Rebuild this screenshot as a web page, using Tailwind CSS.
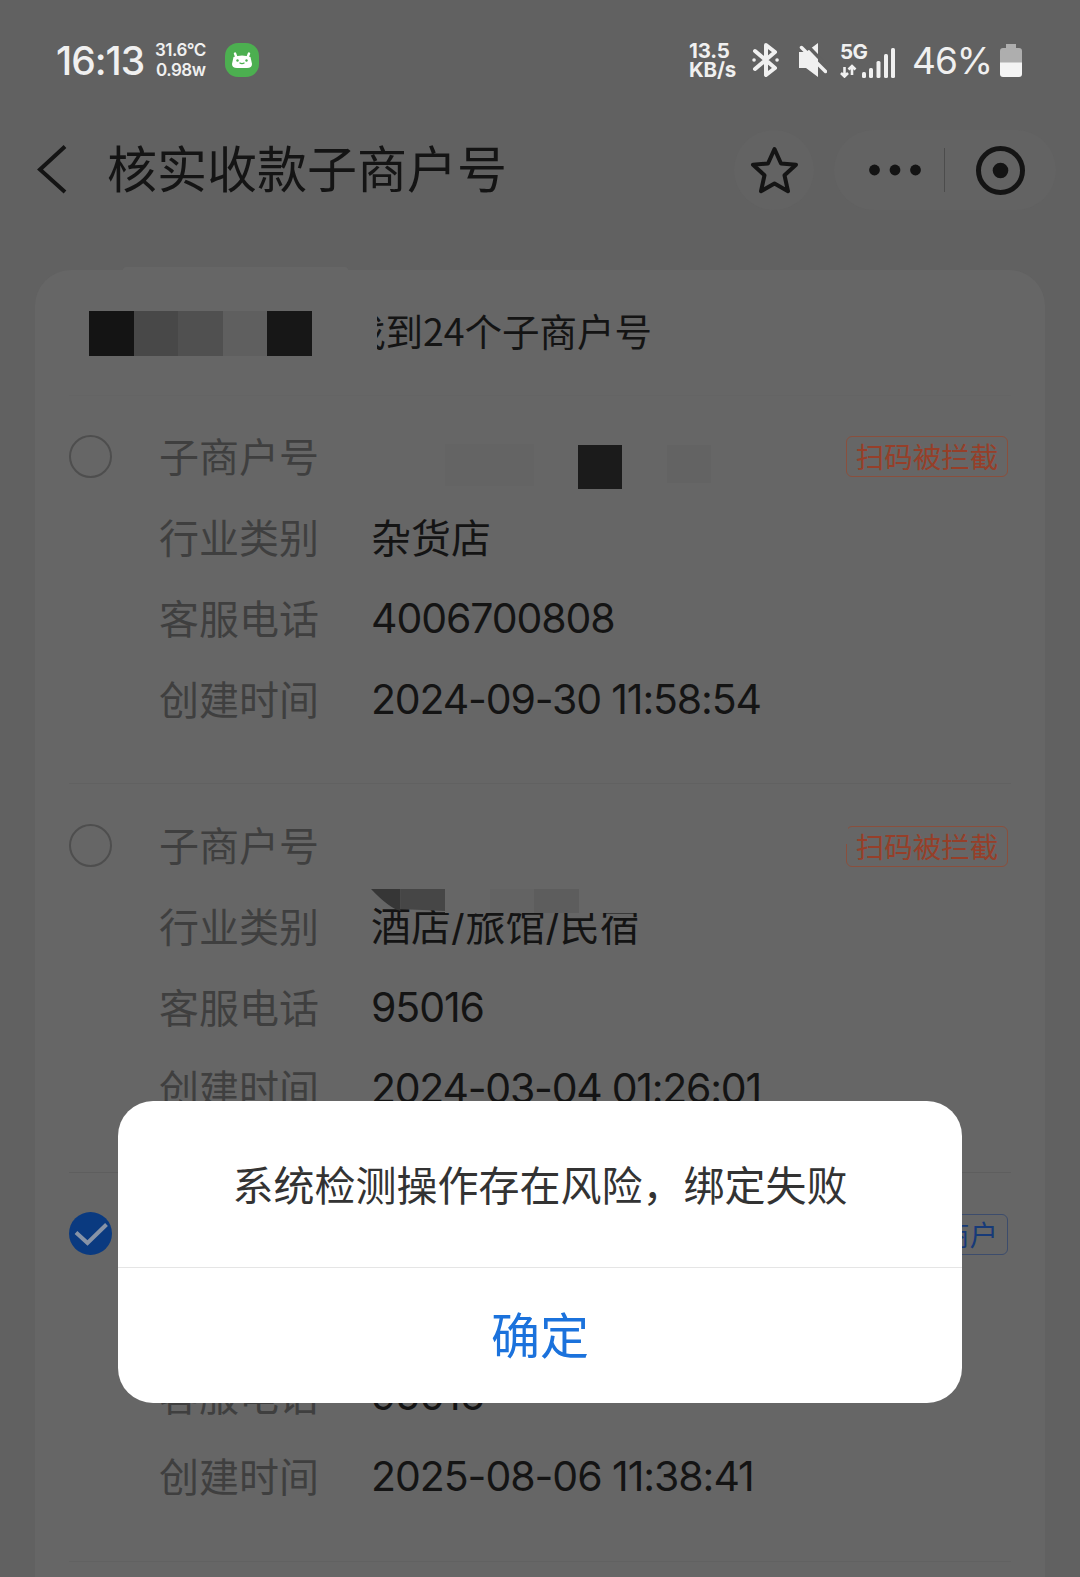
<!DOCTYPE html>
<html lang="zh-CN">
<head>
    <meta charset="UTF-8">
    <meta name="viewport" content="width=device-width, initial-scale=1.0">
    <title>核实收款子商户号</title>
    <script src="https://cdn.jsdelivr.net/npm/@tailwindcss/browser@4"></script>
</head>
<body class="bg-[#616161]">
    <div class="relative w-[1080px] h-[1577px] overflow-hidden bg-[#616161] text-[#141414] font-['Inter','Noto_Sans_CJK_SC',sans-serif]">

        <!-- Status bar -->
        <div class="flex items-center h-[120px] pl-[56px] pr-[58px] text-[#f0f0f0]">
            <div class="w-[99px] text-[39px] leading-none font-medium tracking-[-1px]">16:13</div>
            <div class="w-[70px] text-[17px] leading-[20px] font-semibold tracking-[-0.5px]">
                <div>31.6°C</div>
                <div class="pl-[1px]">0.98w</div>
            </div>
            <svg class="w-[34px] h-[34px]" viewBox="0 0 34 34">
                <rect width="34" height="34" rx="13" fill="#4caf50"/>
                <path d="M10 10.500l1.500 4M24 10.500l-1.500 4" stroke="#fff" stroke-width="2.400" stroke-linecap="round"/>
                <path d="M8.500 14Q17 11 25.500 14L27 21q0 4-5 4H12q-5 0-5-4z" fill="#fff"/>
                <path d="M14.500 19.800q2.500 1.600 5 0" stroke="#4caf50" stroke-width="1.200" fill="none"/>
                <circle cx="12.500" cy="17.500" r="1.200" fill="#4caf50"/>
                <circle cx="21.500" cy="17.500" r="1.200" fill="#4caf50"/>
            </svg>
            <div class="ml-auto flex items-center">
                <div class="w-[63px] text-[20.500px] leading-[19px] font-bold tracking-[-0.200px]">
                    <div>13.5</div>
                    <div>KB/s</div>
                </div>
                <svg class="w-[27px] h-[36px]" viewBox="0 0 27 36" fill="none" stroke="#f0f0f0" stroke-width="4" stroke-linecap="round" stroke-linejoin="round">
                    <path d="M3 9l20 17-9 7V3l9 7L3 27"/>
                    <path d="M2 18h.1M25 18h.1" stroke-width="3.500"/>
                </svg>
                <svg class="w-[28px] h-[36px] ml-[20px] mr-[13px]" viewBox="0 0 28 36">
                    <path d="M0 10h7l12-9v34l-12-9h-7z" fill="#f0f0f0"/>
                    <path d="M5 0l24 25" stroke="#616161" stroke-width="3.500"/>
                    <path d="M2.500 5.500l24 24" stroke="#f0f0f0" stroke-width="3.500" stroke-linecap="round"/>
                </svg>
                <div class="w-[72px] h-[36px]">
                    <svg class="w-[56px] h-[36px]" viewBox="0 0 56 36">
                        <text x="0" y="17" font-size="20.500" font-weight="700" fill="#f0f0f0" letter-spacing="-0.500">5G</text>
                        <g fill="#f0f0f0">
                            <rect x="22" y="30" width="4" height="6" rx="1.500"/>
                            <rect x="29" y="26" width="4" height="10" rx="1.500"/>
                            <rect x="36.500" y="19" width="4" height="17" rx="1.500"/>
                            <rect x="44" y="12" width="4" height="24" rx="1.500"/>
                            <rect x="51" y="6" width="4" height="30" rx="1.500"/>
                        </g>
                        <path d="M4.500 25v9M1 31l3.500 3.500L8 31M12 33v-9M8.500 27.500L12 24l3.500 3.500" fill="none" stroke="#f0f0f0" stroke-width="2.600"/>
                    </svg>
                </div>
                <div class="w-[88px] text-[37px] leading-none tracking-[-1px] pt-[1px]">46%</div>
                <svg class="w-[22px] h-[33px]" viewBox="0 0 22 33">
                    <path d="M6 0h10v4h3q3 0 3 3v12H0V7q0-3 3-3h3z" fill="#aeaeae"/>
                    <path d="M0 18.500h22V30q0 3-3 3H3q-3 0-3-3z" fill="#f4f4f4"/>
                </svg>
            </div>
        </div>

        <!-- Title bar -->
        <div class="flex items-center h-[100px] pl-[36px] pr-[24px]">
            <svg class="w-[32px] h-[50px]" viewBox="0 0 32 50" fill="none" stroke="#141414" stroke-width="4">
                <path d="M29 1.500L4 24.500l25 22.500"/>
            </svg>
            <h1 class="ml-[39px] text-[50px] leading-none pb-[1px]">核实收款子商户号</h1>
            <div class="ml-auto w-[80px] h-[80px] rounded-full bg-[#636363] flex items-center justify-center">
                <svg class="w-[48px] h-[48px]" viewBox="0 0 48 48" fill="none" stroke="#141414" stroke-width="4" stroke-linejoin="round">
                    <path d="M24.500 3l6.500 14.500 15 1.200-11.500 10.500 3.500 16-13.500-7.700-13.500 7.700 3.500-16L3 18.700l15-1.200z"/>
                </svg>
            </div>
            <div class="ml-[20px] w-[222px] h-[80px] rounded-full bg-[#636363] flex items-center pl-[35px] pr-[31px]">
                <svg class="w-[53px] h-[12px]" viewBox="0 0 53 12" fill="#141414">
                    <circle cx="5.500" cy="6" r="5.400"/>
                    <circle cx="26" cy="6" r="5.400"/>
                    <circle cx="46.500" cy="6" r="5.400"/>
                </svg>
                <div class="ml-[22px] w-px h-[44px] bg-[#4c4c4c]"></div>
                <svg class="ml-auto w-[49px] h-[49px]" viewBox="0 0 49 49">
                    <circle cx="24.500" cy="24.500" r="22" fill="none" stroke="#141414" stroke-width="5"/>
                    <circle cx="24.500" cy="24.500" r="7.800" fill="#141414"/>
                </svg>
            </div>
        </div>

        <!-- Merchant list card -->
        <div class="mt-[50px] mx-[35px] h-[1400px] rounded-t-[36px] bg-[#666666] px-[34px]">
            <div class="relative flex items-center h-[126px] pl-[20px] border-b border-[#646464]">
                <div class="absolute left-[54px] top-[-3px] w-[225px] h-[3px] rounded-t bg-[#666666]"></div>
                <div class="flex h-[45px] mt-[1px]">
                    <div class="w-[44.500px] bg-[#141414]"></div>
                    <div class="w-[44.500px] bg-[#484848]"></div>
                    <div class="w-[44.500px] bg-[#505050]"></div>
                    <div class="w-[44.500px] bg-[#5f5f5f]"></div>
                    <div class="w-[44.500px] bg-[#171717]"></div>
                </div>
                <div class="ml-[65px] mb-[5px] w-[9px] flex justify-end overflow-hidden text-[37.500px] leading-[56px] font-['Noto_Sans_CJK_SC',sans-serif]"><span>找</span></div>
                <div class="mb-[5px] text-[37.500px] leading-[56px] whitespace-nowrap font-['Noto_Sans_CJK_SC',sans-serif]">到24个子商户号</div>
            </div>

            <!-- Item 1 -->
            <div class="relative flex h-[388px] pt-[20px] border-b border-[#616161]">
                <div class="mt-[19px] w-[43px] h-[43px] rounded-full border-2 border-[#4e4e4e]"></div>
                <div class="ml-[47px] w-[212px] pt-[1px] text-[40px] leading-[81px] text-[#3f3f3f]">
                    <div>子商户号</div>
                    <div>行业类别</div>
                    <div>客服电话</div>
                    <div>创建时间</div>
                </div>
                <div class="text-[40px] leading-[81px] whitespace-nowrap">
                    <div class="flex items-center h-[81px] pl-[74px]">
                        <div class="w-[89px] h-[42px] mt-[16px] bg-[#646464]"></div>
                        <div class="ml-[44px] w-[44px] h-[44px] mt-[21px] bg-[#1b1b1b]"></div>
                        <div class="ml-[45px] w-[44px] h-[38px] mt-[14px] bg-[#636363]"></div>
                    </div>
                    <div class="relative top-px">杂货店</div>
                    <div class="text-[41px] tracking-[-1.100px]">4006700808</div>
                    <div class="text-[41px] tracking-[-1.150px]">2024-09-30 11:58:54</div>
                </div>
                <div class="absolute right-[3px] top-[40px] w-[162px] h-[41px] rounded-[6px] border border-[#8a4f3d] flex items-center justify-center pt-[3px] text-[28.500px] leading-none text-[#963f29]">扫码被拦截</div>
            </div>

            <!-- Item 2 -->
            <div class="relative flex h-[389px] pt-[21px] border-b border-[#5e5e5e]">
                <div class="mt-[19px] w-[43px] h-[43px] rounded-full border-2 border-[#4e4e4e]"></div>
                <div class="ml-[47px] w-[212px] pt-[1px] text-[40px] leading-[81px] text-[#3f3f3f]">
                    <div>子商户号</div>
                    <div>行业类别</div>
                    <div>客服电话</div>
                    <div>创建时间</div>
                </div>
                <div class="text-[40px] leading-[81px] whitespace-nowrap">
                    <div class="h-[81px]"></div>
                    <div>酒店/旅馆/民宿</div>
                    <div class="text-[41px] tracking-[-1.100px]">95016</div>
                    <div class="text-[41px] tracking-[-1.250px]">2024-03-04 01:26:01</div>
                </div>
                <!-- mosaic over the account number -->
                <svg class="absolute left-[302px] top-[100px] w-[300px] h-[30px]" viewBox="0 0 300 30">
                    <path d="M74 0h215v29H74z" fill="#666666"/>
                    <path d="M0 5h29.500v22Q18 24 0 5z" fill="#363636"/>
                    <path d="M29.500 5H74v22l-44.500-2z" fill="#464646"/>
                    <path d="M119 5h44v24h-44z" fill="#636363"/>
                    <path d="M163 5h45v24h-45z" fill="#5d5d5d"/>
                </svg>
                <div class="absolute right-[3px] top-[42px] w-[162px] h-[41px] rounded-[6px] border border-[#8a4f3d] flex items-center justify-center pt-[3px] text-[28.500px] leading-none text-[#963f29]">扫码被拦截</div>
                <div class="absolute right-[163px] top-[42px] w-[4px] h-[18px] bg-[#666666]"></div>
            </div>

            <!-- Item 3 -->
            <div class="relative flex h-[389px] pt-[20px] border-b border-[#616161]">
                <svg class="mt-[19px] w-[43px] h-[43px]" viewBox="0 0 43 43">
                    <circle cx="21.500" cy="21.500" r="21.500" fill="#0a3a80"/>
                    <path d="M7 20.500l11.500 10.500L37.500 12.500" fill="none" stroke="#8793a6" stroke-width="4"/>
                </svg>
                <div class="ml-[47px] w-[212px] pt-[1px] text-[40px] leading-[81px] text-[#3f3f3f]">
                    <div>子商户号</div>
                    <div>行业类别</div>
                    <div>客服电话</div>
                    <div>创建时间</div>
                </div>
                <div class="text-[41px] leading-[81px] tracking-[-1.050px] whitespace-nowrap">
                    <div class="h-[162px]"></div>
                    <div>95016</div>
                    <div>2025-08-06 11:38:41</div>
                </div>
                <div class="absolute right-[3px] top-[41px] w-[162px] h-[41px] rounded-[6px] border border-[#3c4c6c] flex items-center justify-end pt-[3px] pr-[9px] text-[28.500px] leading-none text-[#173a78]">商户</div>
            </div>
        </div>

        <!-- Dialog -->
        <div class="absolute left-[118px] top-[1101px] w-[844px] h-[302px] rounded-[35px] bg-white overflow-hidden">
            <div class="flex items-center justify-center h-[167px] pt-[5px] border-b border-[#e5e5e5] text-[41px] text-[#333333] whitespace-nowrap">系统检测操作存在风险，绑定失败</div>
            <button class="block w-full h-[135px] pt-[3px] text-[49px] text-[#1b72dc]">确定</button>
        </div>
    </div>
</body>
</html>
